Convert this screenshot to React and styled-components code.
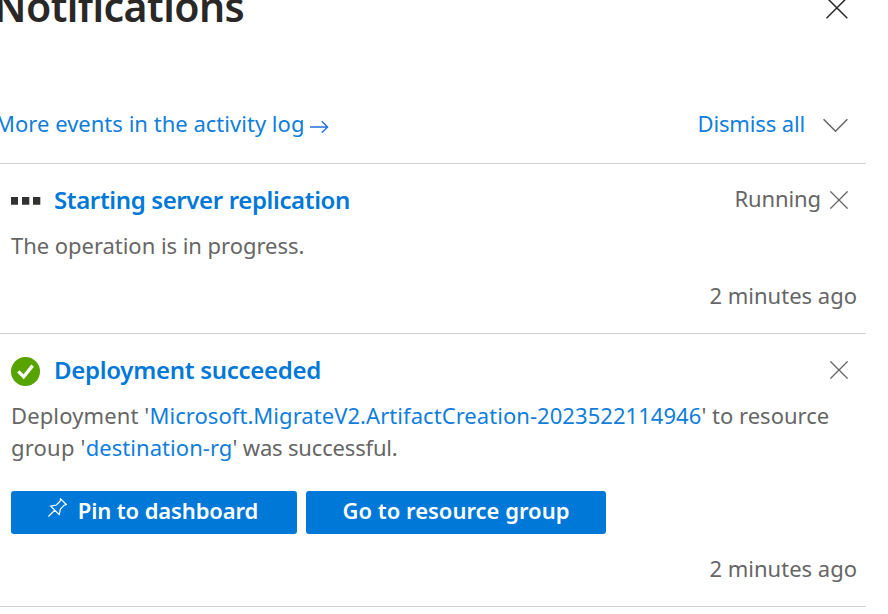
import React from "react";
import styled, { createGlobalStyle } from "styled-components";

const GlobalStyle = createGlobalStyle`
  * { box-sizing: border-box; }
  html, body { margin: 0; background: #fff; overflow: hidden; }
  body { font-family: "Noto Sans", "Open Sans", sans-serif; }
`;

const Panel = styled.main`
  width: 866px;
  height: 614px;
  color: #666;
  font-size: 22px;
  line-height: 32px;
  white-space: nowrap;
`;

const Header = styled.header`
  display: flex;
  justify-content: space-between;
  align-items: flex-start;
  height: 85px;
  padding-right: 18px;
`;

const Title = styled.h1`
  margin: -19px 0 0 -6px;
  font-size: 41px;
  line-height: 50px;
  font-weight: 600;
  letter-spacing: ${(p) => p.$track}px;
  color: #292827;
`;

const IconButton = styled.button`
  display: flex;
  padding: 0;
  border: 0;
  background: none;
  color: ${(p) => p.$color || "#666"};
`;

const Toolbar = styled.div`
  display: flex;
  justify-content: space-between;
  height: 79px;
  padding: 22px 18px 0 0;
  border-bottom: 1px solid #d2d2d2;
`;

const ToolbarGroup = styled.div`
  display: flex;
  align-items: flex-start;
  gap: ${(p) => p.$gap}px;
  margin-left: ${(p) => p.$offset || 0}px;
`;

const Link = styled.a`
  color: #0f7edb;
  letter-spacing: ${(p) => p.$track || 0}px;
`;

const IconSlot = styled.span`
  display: flex;
  padding-top: ${(p) => p.$top}px;
`;

const Card = styled.article`
  display: flex;
  flex-direction: column;
  height: ${(p) => p.$height}px;
  padding: 20px 9px 0 11px;
  border-bottom: 1px solid #d2d2d2;
`;

const CardHead = styled.div`
  display: flex;
  align-items: center;
  height: 34px;
  padding-right: 9px;
`;

const StatusIcon = styled.span`
  display: flex;
  width: 43px;
`;

const CardTitle = styled.h2`
  flex: 1;
  margin: -2px 0 0;
  font-size: 24px;
  line-height: 34px;
  font-weight: 600;
  letter-spacing: ${(p) => p.$track}px;
  color: #0078d7;
`;

const Text = styled.span`
  letter-spacing: ${(p) => p.$track}px;
`;

const Status = styled(Text)`
  margin: -6px 9px 0 0;
`;

const Dismiss = styled(IconButton)`
  margin-top: -2px;
`;

const Message = styled.p`
  margin: 11px 0 0;
`;

const Line = styled.span`
  display: block;
  letter-spacing: ${(p) => p.$track || 0}px;
`;

const Time = styled.time`
  align-self: flex-end;
  margin-top: ${(p) => p.$top}px;
`;

const Actions = styled.div`
  display: flex;
  gap: 9px;
  margin-top: 28px;
`;

const Action = styled.button`
  display: flex;
  justify-content: center;
  gap: 11px;
  width: ${(p) => p.$width}px;
  height: 43px;
  padding: 3px ${(p) => p.$shift || 0}px 0 0;
  border: 0;
  border-radius: 3px;
  background: #0078d7;
  color: #fff;
  font: 600 22px/32px "Noto Sans", "Open Sans", sans-serif;
  letter-spacing: ${(p) => p.$track}px;
`;

const Cross = () => (
  <svg width="18" height="18" viewBox="0 0 18 18" fill="none" stroke="currentColor" strokeWidth="1.3">
    <path d="M.4 .4L17.6 17.6M17.6 .4L.4 17.6" />
  </svg>
);

const Arrow = () => (
  <svg width="19" height="13" viewBox="0 0 19 13" fill="none" stroke="#2270e0" strokeWidth="1.4">
    <path d="M0 7H17.5M11.8 1.2L17.6 7L11.8 12.8" />
  </svg>
);

const Chevron = () => (
  <svg width="25" height="15" viewBox="0 0 25 15" fill="none" stroke="#666" strokeWidth="1.6">
    <path d="M.6 1.2L12.5 13.2L24.4 1.2" />
  </svg>
);

const Dots = () => (
  <svg width="30" height="8" viewBox="0 0 30 8" fill="#323130">
    <path d="M0 0h7v7.7H0zM11 0h7.3v7.7H11zM22 0h7.3v7.7H22z" />
  </svg>
);

const Success = () => (
  <svg width="29" height="29" viewBox="0 0 29 29">
    <circle cx="14.5" cy="14.5" r="14.5" fill="#57a300" />
    <path d="M7.4 14.3L12.7 19.8L21.6 8.6" fill="none" stroke="#fff" strokeWidth="3.3" />
  </svg>
);

const Pin = () => (
  <svg width="19" height="19" viewBox="0 0 19 19" fill="none" stroke="#fff" strokeWidth="1.2">
    <path d="M.4 18.5L6.7 12.3M12.6 .8L18.3 6.5L16.2 7.2L12.4 11L11.2 16.6L2.7 8.1L8.3 7L12.1 3.1Z" />
  </svg>
);

export default function App() {
  return (
    <>
      <GlobalStyle />
      <Panel>
        <Header>
          <Title $track={-0.55}>Notifications</Title>
          <IconButton $color="#292827" aria-label="Close">
            <svg width="22" height="20" viewBox="0 0 22 20" fill="none" stroke="currentColor" strokeWidth="1.5">
              <path d="M.5 -2.5L21.3 18.3M21.3 -2.5L.5 18.3" />
            </svg>
          </IconButton>
        </Header>
        <Toolbar>
          <ToolbarGroup $gap={6} $offset={-5}>
            <Link $track={0.02}>More events in the activity log</Link>
            <IconSlot $top={13}><Arrow /></IconSlot>
          </ToolbarGroup>
          <ToolbarGroup $gap={18}>
            <Link $track={-0.14}>Dismiss all</Link>
            <IconSlot $top={11}><Chevron /></IconSlot>
          </ToolbarGroup>
        </Toolbar>
        <Card $height={170}>
          <CardHead>
            <StatusIcon><Dots /></StatusIcon>
            <CardTitle $track={-0.37}>Starting server replication</CardTitle>
            <Status $track={-0.1}>Running</Status>
            <Dismiss aria-label="Dismiss"><Cross /></Dismiss>
          </CardHead>
          <Message>
            <Line $track={-0.04}>The operation is in progress.</Line>
          </Message>
          <Time $top={18}>2 minutes ago</Time>
        </Card>
        <Card $height={273}>
          <CardHead>
            <StatusIcon><Success /></StatusIcon>
            <CardTitle $track={-0.28}>Deployment succeeded</CardTitle>
            <Dismiss aria-label="Dismiss"><Cross /></Dismiss>
          </CardHead>
          <Message>
            <Line>
              <Text $track={0.12}>Deployment '</Text>
              <Link $track={0.055}>Microsoft.MigrateV2.ArtifactCreation-2023522114946</Link>
              <Text $track={0}>' to resource</Text>
            </Line>
            <Line>
              <Text $track={0.2}>group '</Text>
              <Link $track={0.05}>destination-rg</Link>
              <Text $track={-0.17}>' was successful.</Text>
            </Line>
          </Message>
          <Actions>
            <Action $width={286} $track={-0.12} $shift={2}>
              <IconSlot $top={4}><Pin /></IconSlot>
              Pin to dashboard
            </Action>
            <Action $width={300} $track={0}>Go to resource group</Action>
          </Actions>
          <Time $top={18}>2 minutes ago</Time>
        </Card>
      </Panel>
    </>
  );
}
